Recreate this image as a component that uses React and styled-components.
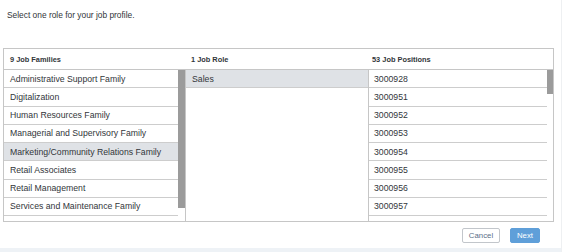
import styled, { createGlobalStyle } from 'styled-components';

const GlobalStyle = createGlobalStyle`
  html, body {
    margin: 0;
    padding: 0;
    background: #ffffff;
  }
  body {
    font-family: "Liberation Sans", Arial, sans-serif;
    color: #32363a;
  }
`;

const Dialog = styled.div`
  width: 562px;
  height: 252px;
  box-sizing: border-box;
  border-right: 1px solid #eef0f2;
  display: flex;
  flex-direction: column;
  overflow: hidden;
`;

const Intro = styled.p`
  margin: 0;
  height: 48px;
  box-sizing: border-box;
  padding: 10px 0 0 7px;
  font-size: 8.4px;
  line-height: 10px;
`;

const Table = styled.div`
  margin-left: 3px;
  width: 551px;
  height: 174px;
  box-sizing: border-box;
  border: 1px solid #c6c6c6;
  display: grid;
  grid-template-columns: 182px 183px 1fr;
  grid-template-rows: 21px 1fr;
`;

const HeaderCell = styled.div`
  height: 21px;
  box-sizing: border-box;
  border-bottom: 1px solid #c6c6c6;
  padding-left: ${(p) => p.$pad}px;
  display: flex;
  align-items: center;
  font-size: 7.4px;
  font-weight: bold;
  white-space: nowrap;
`;

const Column = styled.div`
  display: flex;
  min-height: 0;
  overflow: hidden;
  border-right: ${(p) => (p.$divider ? '1px solid #c6c6c6' : 'none')};
`;

const List = styled.div`
  flex: 1;
  min-width: 0;
  display: flex;
  flex-direction: column;
  overflow: hidden;
`;

const Row = styled.div`
  height: 18.25px;
  flex-shrink: 0;
  box-sizing: border-box;
  border-bottom: 1px solid #cdcdcd;
  background: ${(p) => (p.$selected ? '#dfe2e6' : '#ffffff')};
  padding-left: ${(p) => p.$pad}px;
  display: flex;
  align-items: center;
  font-size: 8.7px;
  white-space: nowrap;
  overflow: hidden;
`;

const Track = styled.div`
  width: ${(p) => p.$w}px;
  flex-shrink: 0;
  background: #ffffff;
`;

const Thumb = styled.div`
  height: ${(p) => p.$h}px;
  background: #9b9b9b;
`;

const Footer = styled.div`
  display: flex;
  justify-content: flex-end;
  gap: 10px;
  padding: 6px 21px 0 0;
  height: 26px;
  box-sizing: border-box;
`;

const Button = styled.button`
  height: 15px;
  padding: 0;
  width: ${(p) => p.$w}px;
  border-radius: 2px;
  font-family: inherit;
  font-size: 7.8px;
  cursor: pointer;
  border: 1px solid ${(p) => (p.$primary ? '#5f9fd9' : '#c2c6cb')};
  background: ${(p) => (p.$primary ? '#5f9fd9' : '#ffffff')};
  color: ${(p) => (p.$primary ? '#ffffff' : '#5b6f88')};
`;

const Band = styled.div`
  flex: 1;
  background: #eef2f6;
`;

const families = [
  'Administrative Support Family',
  'Digitalization',
  'Human Resources Family',
  'Managerial and Supervisory Family',
  'Marketing/Community Relations Family',
  'Retail Associates',
  'Retail Management',
  'Services and Maintenance Family',
  'Supply Chain Family',
];

const positions = ['3000928', '3000951', '3000952', '3000953', '3000954', '3000955', '3000956', '3000957', '3000958'];

export default function App() {
  return (
    <>
      <GlobalStyle />
      <Dialog>
        <Intro>Select one role for your job profile.</Intro>
        <Table>
          <HeaderCell $pad={6}>9 Job Families</HeaderCell>
          <HeaderCell $pad={5}>1 Job Role</HeaderCell>
          <HeaderCell $pad={3}>53 Job Positions</HeaderCell>

          <Column $divider>
            <List>
              {families.map((f, i) => (
                <Row key={f} $pad={6} $selected={i === 4}>
                  {f}
                </Row>
              ))}
            </List>
            <Track $w={7}>
              <Thumb $h={138} />
            </Track>
          </Column>

          <Column $divider>
            <List>
              <Row $pad={6} $selected>
                Sales
              </Row>
            </List>
          </Column>

          <Column>
            <List>
              {positions.map((p) => (
                <Row key={p} $pad={5}>
                  {p}
                </Row>
              ))}
            </List>
            <Track $w={6}>
              <Thumb $h={24} />
            </Track>
          </Column>
        </Table>
        <Footer>
          <Button $w={38}>Cancel</Button>
          <Button $w={30} $primary>
            Next
          </Button>
        </Footer>
        <Band />
      </Dialog>
    </>
  );
}
